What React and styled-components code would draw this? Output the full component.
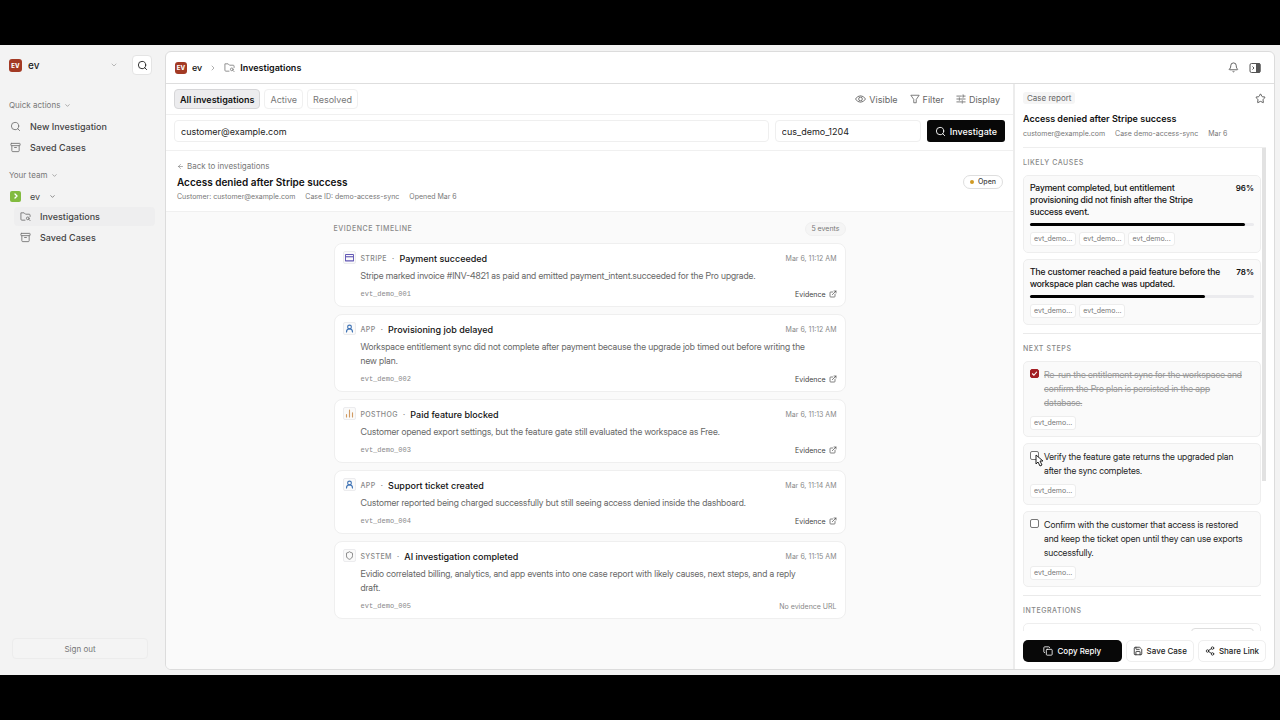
import React, { useState } from "react";
import styled, { createGlobalStyle } from "styled-components";
import {
  Search, Archive, ChevronDown, ChevronRight, Bell, Star, Copy, Save,
  Share2, ArrowLeft, UserRound, Shield, ExternalLink,
} from "lucide-react";

const GlobalStyle = createGlobalStyle`
  * { box-sizing: border-box; }
  body { margin: 0; background: #000; }
  body, button, input { font-family: Inter, "Liberation Sans", sans-serif; font-size: 9px; }
  h1, h2, h3, p, ul, ol { margin: 0; padding: 0; font-size: inherit; }
  ul, ol { list-style: none; }
  a { color: inherit; text-decoration: none; }
  button { cursor: pointer; margin: 0; }
  svg { display: block; flex: none; }
`;

const prose = `"Inter Display", Inter, "Liberation Sans", sans-serif`;

const Screen = styled.div`
  height: 100vh;
  min-height: 480px;
  padding: 45px 0;
  background: #000;
`;
const Shell = styled.div`
  height: 100%;
  display: flex;
  background: #f3f3f3;
  color: #111;
`;

/* Sidebar */
const Sidebar = styled.aside`
  width: 165px;
  flex: none;
  display: flex;
  flex-direction: column;
  padding: 10px 10px 16px 9px;
`;
const SideTop = styled.div`
  display: flex;
  align-items: center;
  gap: 14px;
  padding-right: 3px;
`;
const Workspace = styled.button`
  flex: 1;
  display: flex;
  align-items: center;
  gap: 6px;
  padding: 0;
  border: 0;
  background: none;
  color: #222;
  font-size: 10px;
  font-weight: 500;
  svg { margin-left: auto; color: #999; }
`;
const Logo = styled.span`
  display: grid;
  place-items: center;
  width: ${(p) => p.$size}px;
  height: ${(p) => p.$size}px;
  border-radius: 3px;
  background: #a33a24;
  color: #fff;
  font-size: 6px;
  font-weight: 800;
`;
const SquareButton = styled.button`
  display: grid;
  place-items: center;
  width: 20px;
  height: 20px;
  padding: 0;
  border: 1px solid #e4e4e4;
  border-radius: 4px;
  background: #fff;
  color: #222;
`;
const GroupLabel = styled.button`
  display: flex;
  align-items: center;
  gap: 4px;
  height: 12px;
  padding: 0;
  border: 0;
  background: none;
  color: #777;
  font-size: 8px;
  margin-top: ${(p) => p.$top}px;
`;
const NavList = styled.ul`
  display: flex;
  flex-direction: column;
  gap: 2px;
  margin-top: ${(p) => p.$top}px;
`;
const NavLink = styled.a`
  display: flex;
  align-items: center;
  gap: 9px;
  height: 19px;
  margin-left: ${(p) => (p.$nested ? 5 : 0)}px;
  padding-left: ${(p) => (p.$nested ? 6 : 1)}px;
  border-radius: 4px;
  background: ${(p) => (p.$active ? "#eeeeef" : "none")};
  color: #444;
  font-weight: 500;
  svg { color: #777; }
`;
const TeamButton = styled.button`
  display: flex;
  align-items: center;
  gap: 9px;
  height: 16px;
  margin-top: 7px;
  padding: 0 0 0 1px;
  border: 0;
  background: none;
  color: #444;
`;
const TeamMark = styled.span`
  display: grid;
  place-items: center;
  width: 11px;
  height: 11px;
  border-radius: 2px;
  background: #82bb3f;
  color: #fff;
`;
const SignOut = styled.button`
  height: 21px;
  margin: auto 7px 0 3px;
  border: 1px solid #ececec;
  border-radius: 4px;
  background: #f4f4f4;
  color: #777;
  font-size: 8px;
`;

/* Main frame */
const Main = styled.main`
  flex: 1;
  min-width: 0;
  display: flex;
  flex-direction: column;
  margin: 6px 5px 5px 0;
  border: 1px solid #dcdcdc;
  border-radius: 6px;
  background: #fff;
  overflow: hidden;
`;
const TopBar = styled.header`
  display: flex;
  align-items: center;
  justify-content: space-between;
  flex: none;
  height: 32px;
  padding: 0 13px 0 9px;
  border-bottom: 1px solid #dedede;
`;
const Crumbs = styled.nav`
  display: flex;
  align-items: center;
  gap: 7px;
  font-weight: 500;
  svg { color: #888; }
  a { display: flex; align-items: center; gap: 5px; }
  a[aria-current] { font-weight: 600; }
`;
const Inline = styled.div`
  display: flex;
  align-items: center;
  gap: ${(p) => p.$gap}px;
`;
const IconButton = styled.button`
  display: grid;
  place-items: center;
  padding: 0;
  border: 0;
  background: none;
  color: #555;
`;
const Columns = styled.div`
  flex: 1;
  min-height: 0;
  display: flex;
`;
const Center = styled.section`
  flex: 1;
  min-width: 0;
  display: flex;
  flex-direction: column;
  background: #fafafa;
`;
const Toolbar = styled.div`
  display: flex;
  align-items: center;
  justify-content: space-between;
  height: 31px;
  padding: 0 13px 0 8px;
  border-bottom: 1px solid #f0f0f0;
  background: #fff;
`;
const Tab = styled.button`
  height: 20px;
  padding: 0 5px;
  border: 1px solid ${(p) => (p.$active ? "#d6d6d8" : "#f0f0f0")};
  border-radius: 4px;
  background: ${(p) => (p.$active ? "#ececee" : "#fff")};
  color: ${(p) => (p.$active ? "#111" : "#777")};
  font-weight: ${(p) => (p.$active ? 600 : 400)};
`;
const ViewButton = styled.button`
  display: flex;
  align-items: center;
  gap: 3px;
  padding: 0;
  border: 0;
  background: none;
  color: #666;
`;
const SearchForm = styled.form`
  display: flex;
  gap: 6px;
  padding: 5px 8px 8px;
  border-bottom: 1px solid #f0f0f0;
  background: #fff;
`;
const Field = styled.input`
  flex: ${(p) => (p.$wide ? "1" : "none")};
  min-width: 0;
  width: 146px;
  height: 22px;
  padding: 0 6px;
  border: 1px solid #efefef;
  border-radius: 4px;
  background: #fff;
  color: #222;
  outline: 0;
`;
const DarkButton = styled.button`
  display: flex;
  align-items: center;
  justify-content: center;
  gap: 4px;
  height: 22px;
  padding: 0 8px;
  border: 0;
  border-radius: ${(p) => p.$radius || 3}px;
  background: #080808;
  color: #fff;
  font-size: ${(p) => (p.$small ? 8 : 9)}px;
  font-weight: 500;
`;
const CaseHeader = styled.div`
  display: flex;
  align-items: center;
  justify-content: space-between;
  padding: 9px 10px 8px 11px;
  border-bottom: 1px solid #f0f0f0;
  background: #fff;
`;
const BackLink = styled.a`
  display: flex;
  align-items: center;
  gap: 3px;
  height: 12px;
  color: #777;
  font-size: 8px;
`;
const CaseTitle = styled.h1`
  margin-top: 3px;
  font-size: 10px;
  line-height: 14px;
  font-weight: 600;
`;
const Meta = styled.div`
  display: flex;
  gap: 10px;
  margin-top: 2px;
  color: #777;
  font-size: 7px;
  line-height: 12px;
`;
const Status = styled.span`
  display: flex;
  align-items: center;
  gap: 4px;
  height: 14px;
  padding: 0 6px;
  border: 1px solid #dedede;
  border-radius: 7px;
  color: #444;
  font-size: 7px;
  font-weight: 500;
  &::before {
    content: "";
    width: 4px;
    height: 4px;
    border-radius: 50%;
    background: #d09a22;
  }
`;
const Timeline = styled.div`
  width: 100%;
  max-width: 512px;
  margin: 0 auto;
  padding-top: 10px;
`;
const TimelineHead = styled.div`
  display: flex;
  align-items: center;
  justify-content: space-between;
  height: 14px;
`;
const Overline = styled.h2`
  color: #888;
  font-size: 7px;
  line-height: 12px;
  font-weight: 500;
  letter-spacing: 0.08em;
  text-transform: uppercase;
`;
const Count = styled.span`
  padding: 0 5px;
  border: 1px solid #f0f0f0;
  border-radius: 7px;
  background: #f5f5f5;
  color: #777;
  font-size: 7px;
  line-height: 12px;
`;
const EventList = styled.ol`
  display: flex;
  flex-direction: column;
  gap: 7px;
  margin-top: 7px;
`;
const EventCard = styled.li`
  display: flex;
  gap: 5px;
  padding: 7px 8px 6px;
  border: 1px solid #efefef;
  border-radius: 8px;
  background: #fff;
`;
const EventIcon = styled.span`
  display: grid;
  place-items: center;
  width: 13px;
  height: 13px;
  border: 1px solid #ececee;
  border-radius: 2px;
  background: #fafafa;
  color: ${(p) => p.$color};
`;
const EventBody = styled.div`
  flex: 1;
  min-width: 0;
`;
const EventHead = styled.div`
  display: flex;
  align-items: center;
  gap: 5px;
  height: 14px;
  color: #888;
  h3 { color: #111; font-size: 9px; font-weight: 500; }
  time { margin-left: auto; font-size: 7px; }
`;
const Source = styled.span`
  font-size: 7px;
  font-weight: 500;
  letter-spacing: 0.05em;
  text-transform: uppercase;
`;
const EventText = styled.p`
  margin-top: 4px;
  padding-right: 20px;
  color: #666;
  font-family: ${prose};
  line-height: 14px;
`;
const EventFoot = styled.div`
  display: flex;
  align-items: center;
  justify-content: space-between;
  height: 12px;
  margin-top: 5px;
  color: #888;
  font-size: 7px;
  code { font: 7px "Liberation Mono", monospace; }
  a { display: flex; align-items: center; gap: 3px; color: #444; }
`;

/* Report panel */
const Report = styled.aside`
  width: 261px;
  flex: none;
  display: flex;
  flex-direction: column;
  padding: 7px 8px 0 8px;
  border-left: 2px solid #ececec;
`;
const ReportTop = styled.div`
  display: flex;
  align-items: center;
  justify-content: space-between;
  height: 14px;
`;
const Tag = styled.span`
  padding: 0 4px;
  border-radius: 3px;
  background: #f5f5f5;
  color: #666;
  font-size: 8px;
  line-height: 12px;
`;
const ReportTitle = styled.h2`
  margin-top: 7px;
  font-size: 9px;
  line-height: 14px;
  font-weight: 600;
`;
const ScrollFrame = styled.div`
  position: relative;
  flex: 1;
  min-height: 0;
  margin-top: 7px;
  border-top: 1px solid #eee;
`;
const ScrollArea = styled.div`
  height: 100%;
  padding-right: 5px;
  overflow-y: auto;
  scrollbar-width: none;
`;
const ScrollThumb = styled.div`
  position: absolute;
  top: 0;
  right: 0;
  width: 4px;
  height: 69%;
  background: #e2e2e2;
`;
const Block = styled.section`
  display: flex;
  flex-direction: column;
  gap: 6px;
  padding: 9px 0 8px;
  border-bottom: 1px solid #eaeaea;
`;
const Card = styled.article`
  padding: 6px;
  border: 1px solid #eee;
  border-radius: 5px;
  background: #fafafa;
`;
const CauseHead = styled.div`
  display: flex;
  justify-content: space-between;
  gap: 14px;
  font-family: ${prose};
  line-height: 12px;
  font-weight: 500;
  strong { font-family: Inter, sans-serif; font-size: 8px; font-weight: 600; }
`;
const Meter = styled.div`
  height: 3px;
  margin: 5px 0 6px;
  border-radius: 2px;
  background: #ebebee;
`;
const MeterFill = styled.div`
  height: 100%;
  border-radius: 2px;
  background: #000;
`;
const ChipRow = styled.div`
  display: flex;
  gap: 3px;
`;
const Chip = styled.span`
  height: 14px;
  padding: 0 3px;
  border: 1px solid #ededed;
  border-radius: 3px;
  background: #fff;
  color: #777;
  font-size: 7px;
  line-height: 12px;
`;
const Step = styled.label`
  display: flex;
  gap: 5px;
  margin-bottom: 6px;
  padding-right: 6px;
  color: ${(p) => (p.$done ? "#999" : "#222")};
  font-family: ${prose};
  line-height: 14px;
  text-decoration: ${(p) => (p.$done ? "line-through" : "none")};
`;
const Check = styled.input`
  appearance: none;
  flex: none;
  width: 9px;
  height: 9px;
  margin: 1px 0 0;
  border: 1px solid #777;
  border-radius: 2px;
  background: #fff;
  &:checked { border-color: #a31f24; background: #a31f24; }
`;
const CheckWrap = styled.span`
  position: relative;
  display: flex;
  svg { position: absolute; left: 1px; top: 2px; color: #fff; pointer-events: none; }
`;
const Pointer = styled.svg`
  && { left: 5px; top: 4px; }
`;
const IntegrationRow = styled(Card)`
  display: flex;
  justify-content: flex-end;
  height: 32px;
  padding: 4px 6px;
  background: #fff;
`;
const IntegrationSlot = styled.span`
  width: 63px;
  height: 18px;
  border: 1px solid #dedede;
  border-radius: 4px;
`;
const Actions = styled.footer`
  display: flex;
  gap: 4px;
  padding: 9px 0 7px;
  > :first-child { flex: 1; }
`;
const LightButton = styled.button`
  display: flex;
  align-items: center;
  gap: 4px;
  height: 22px;
  padding: 0 6px;
  border: 1px solid #efefef;
  border-radius: 5px;
  background: #fff;
  color: #222;
  font-size: 8px;
  font-weight: 500;
`;

const FolderIcon = () => (
  <svg width="11" height="11" viewBox="0 0 24 24" fill="none" stroke="currentColor" strokeWidth="2" strokeLinecap="round" strokeLinejoin="round">
    <path d="M11 20H4q-2 0-2-2V4h7l3 3h8q2 0 2 2v3" />
    <circle cx="17" cy="16" r="3" />
    <path d="m19.500 18.500 2.500 2.500" />
  </svg>
);
const EyeIcon = () => (
  <svg width="11" height="10" viewBox="0 0 24 22" fill="none" stroke="currentColor" strokeWidth="2" strokeLinejoin="round">
    <path d="M1 11q4-7 11-7t11 7q-4 7-11 7T1 11z" />
    <circle cx="12" cy="11" r="4" />
  </svg>
);
const FunnelIcon = () => (
  <svg width="10" height="10" viewBox="0 0 24 24" fill="none" stroke="currentColor" strokeWidth="2" strokeLinejoin="round">
    <path d="M2 3h20l-7 10v8h-6v-8z" />
  </svg>
);
const CardIcon = () => (
  <svg width="9" height="9" viewBox="0 0 24 24" fill="none" stroke="currentColor" strokeWidth="3" strokeLinejoin="round">
    <rect x="1" y="4" width="22" height="17" rx="2" />
    <path d="M1 10h22" />
  </svg>
);
const SlidersIcon = () => (
  <svg width="10" height="10" viewBox="0 0 24 24" fill="none" stroke="currentColor" strokeWidth="2" strokeLinecap="round">
    <path d="M2 5h11M17 5h5M17 2v6M2 12h4M10 12h12M8 9v6M2 19h11M17 19h5M15 16v6" />
  </svg>
);
const BarsIcon = () => (
  <svg width="9" height="9" viewBox="0 0 24 24" fill="none" stroke="currentColor" strokeWidth="3" strokeLinecap="round">
    <path d="M4 21v-6M12 21V3M20 21V10" />
  </svg>
);
const PanelIcon = () => (
  <svg width="12" height="12" viewBox="0 0 24 24" fill="none" stroke="currentColor" strokeWidth="2">
    <rect x="2" y="3" width="20" height="18" rx="3" />
    <path d="M15 3h5q2 0 2 2v14q0 2-2 2h-5z" fill="currentColor" />
    <path d="m7 9 3 3-3 3" />
  </svg>
);

const EVENTS = [
  { source: "Stripe", icon: <CardIcon />, color: "#6257b5", title: "Payment succeeded", time: "Mar 6, 11:12 AM", text: "Stripe marked invoice #INV-4821 as paid and emitted payment_intent.succeeded for the Pro upgrade.", id: "evt_demo_001", link: true },
  { source: "App", icon: <UserRound size={9} strokeWidth={3} />, color: "#3f73b5", title: "Provisioning job delayed", time: "Mar 6, 11:12 AM", text: "Workspace entitlement sync did not complete after payment because the upgrade job timed out before writing the new plan.", id: "evt_demo_002", link: true },
  { source: "PostHog", icon: <BarsIcon />, color: "#d19a62", title: "Paid feature blocked", time: "Mar 6, 11:13 AM", text: "Customer opened export settings, but the feature gate still evaluated the workspace as Free.", id: "evt_demo_003", link: true },
  { source: "App", icon: <UserRound size={9} strokeWidth={3} />, color: "#3f73b5", title: "Support ticket created", time: "Mar 6, 11:14 AM", text: "Customer reported being charged successfully but still seeing access denied inside the dashboard.", id: "evt_demo_004", link: true },
  { source: "System", icon: <Shield size={9} />, color: "#666", title: "AI investigation completed", time: "Mar 6, 11:15 AM", text: "Evidio correlated billing, analytics, and app events into one case report with likely causes, next steps, and a reply draft.", id: "evt_demo_005", link: false },
];
const CAUSES = [
  { text: "Payment completed, but entitlement provisioning did not finish after the Stripe success event.", score: 96, chips: 3 },
  { text: "The customer reached a paid feature before the workspace plan cache was updated.", score: 78, chips: 2 },
];
const STEPS = [
  "Re-run the entitlement sync for the workspace and confirm the Pro plan is persisted in the app database.",
  "Verify the feature gate returns the upgraded plan after the sync completes.",
  "Confirm with the customer that access is restored and keep the ticket open until they can use exports successfully.",
];

const Chips = ({ count }) => (
  <ChipRow>
    {Array.from({ length: count }, (_, i) => <Chip key={i}>evt_demo...</Chip>)}
  </ChipRow>
);

export default function App() {
  const [tab, setTab] = useState("All investigations");
  const [done, setDone] = useState([true, false, false]);
  const toggle = (i) => setDone(done.map((d, n) => (n === i ? !d : d)));

  return (
    <Screen>
      <GlobalStyle />
      <Shell>
        <Sidebar>
          <SideTop>
            <Workspace><Logo $size={13}>EV</Logo>ev<ChevronDown size={8} /></Workspace>
            <SquareButton aria-label="Search"><Search size={11} /></SquareButton>
          </SideTop>
          <GroupLabel $top={24}>Quick actions<ChevronDown size={7} /></GroupLabel>
          <NavList $top={6}>
            <li><NavLink href="#new"><Search size={11} />New Investigation</NavLink></li>
            <li><NavLink href="#saved"><Archive size={11} />Saved Cases</NavLink></li>
          </NavList>
          <GroupLabel $top={12}>Your team<ChevronDown size={7} /></GroupLabel>
          <TeamButton>
            <TeamMark><ChevronRight size={8} strokeWidth={4} /></TeamMark>ev<ChevronDown size={7} />
          </TeamButton>
          <NavList $top={3}>
            <li><NavLink href="#investigations" $nested $active><FolderIcon />Investigations</NavLink></li>
            <li><NavLink href="#team-saved" $nested><Archive size={11} />Saved Cases</NavLink></li>
          </NavList>
          <SignOut>Sign out</SignOut>
        </Sidebar>

        <Main>
          <TopBar>
            <Crumbs aria-label="Breadcrumb">
              <a href="#home"><Logo $size={12}>EV</Logo>ev</a>
              <ChevronRight size={8} />
              <a href="#investigations" aria-current="page"><FolderIcon />Investigations</a>
            </Crumbs>
            <Inline $gap={10}>
              <IconButton aria-label="Notifications"><Bell size={11} /></IconButton>
              <IconButton aria-label="Toggle panel"><PanelIcon /></IconButton>
            </Inline>
          </TopBar>
          <Columns>
            <Center>
              <Toolbar>
                <Inline $gap={4}>
                  {["All investigations", "Active", "Resolved"].map((name) => (
                    <Tab key={name} $active={tab === name} onClick={() => setTab(name)}>{name}</Tab>
                  ))}
                </Inline>
                <Inline $gap={12}>
                  <ViewButton><EyeIcon />Visible</ViewButton>
                  <ViewButton><FunnelIcon />Filter</ViewButton>
                  <ViewButton><SlidersIcon />Display</ViewButton>
                </Inline>
              </Toolbar>
              <SearchForm onSubmit={(e) => e.preventDefault()}>
                <Field $wide aria-label="Customer email" defaultValue="customer@example.com" />
                <Field aria-label="Customer ID" defaultValue="cus_demo_1204" />
                <DarkButton><Search size={11} />Investigate</DarkButton>
              </SearchForm>
              <CaseHeader>
                <div>
                  <BackLink href="#all"><ArrowLeft size={7} />Back to investigations</BackLink>
                  <CaseTitle>Access denied after Stripe success</CaseTitle>
                  <Meta>
                    <span>Customer: customer@example.com</span>
                    <span>Case ID: demo-access-sync</span>
                    <span>Opened Mar 6</span>
                  </Meta>
                </div>
                <Status>Open</Status>
              </CaseHeader>
              <Timeline>
                <TimelineHead>
                  <Overline>Evidence timeline</Overline>
                  <Count>5 events</Count>
                </TimelineHead>
                <EventList>
                  {EVENTS.map((e) => (
                    <EventCard key={e.id}>
                      <EventIcon $color={e.color}>{e.icon}</EventIcon>
                      <EventBody>
                        <EventHead>
                          <Source>{e.source}</Source>
                          <span>·</span>
                          <h3>{e.title}</h3>
                          <time>{e.time}</time>
                        </EventHead>
                        <EventText>{e.text}</EventText>
                        <EventFoot>
                          <code>{e.id}</code>
                          {e.link
                            ? <a href={"#" + e.id}>Evidence<ExternalLink size={8} /></a>
                            : <span>No evidence URL</span>}
                        </EventFoot>
                      </EventBody>
                    </EventCard>
                  ))}
                </EventList>
              </Timeline>
            </Center>

            <Report>
              <ReportTop>
                <Tag>Case report</Tag>
                <IconButton aria-label="Star case"><Star size={11} /></IconButton>
              </ReportTop>
              <ReportTitle>Access denied after Stripe success</ReportTitle>
              <Meta>
                <span>customer@example.com</span>
                <span>Case demo-access-sync</span>
                <span>Mar 6</span>
              </Meta>
              <ScrollFrame>
                <ScrollArea>
                  <Block>
                    <Overline>Likely causes</Overline>
                    {CAUSES.map((c) => (
                      <Card key={c.score}>
                        <CauseHead><span>{c.text}</span><strong>{c.score}%</strong></CauseHead>
                        <Meter><MeterFill style={{ width: c.score + "%" }} /></Meter>
                        <Chips count={c.chips} />
                      </Card>
                    ))}
                  </Block>
                  <Block>
                    <Overline>Next steps</Overline>
                    {STEPS.map((text, i) => (
                      <Card key={text}>
                        <Step $done={done[i]}>
                          <CheckWrap>
                            <Check type="checkbox" checked={done[i]} onChange={() => toggle(i)} />
                            {done[i] && (
                              <svg width="7" height="7" viewBox="0 0 12 12" fill="none" stroke="currentColor" strokeWidth="2">
                                <path d="m2 6 3 3 5-6" />
                              </svg>
                            )}
                            {i === 1 && (
                              <Pointer width="9" height="13" viewBox="0 0 9 13">
                                <path d="M1 1v9l2-2 2 4 2-1-2-4h3z" fill="#fff" stroke="#222" strokeWidth="1" />
                              </Pointer>
                            )}
                          </CheckWrap>
                          <span>{text}</span>
                        </Step>
                        <Chips count={1} />
                      </Card>
                    ))}
                  </Block>
                  <Block>
                    <Overline>Integrations</Overline>
                    <IntegrationRow><IntegrationSlot /></IntegrationRow>
                  </Block>
                </ScrollArea>
                <ScrollThumb />
              </ScrollFrame>
              <Actions>
                <DarkButton $radius={5} $small><Copy size={10} />Copy Reply</DarkButton>
                <LightButton><Save size={10} />Save Case</LightButton>
                <LightButton><Share2 size={10} />Share Link</LightButton>
              </Actions>
            </Report>
          </Columns>
        </Main>
      </Shell>
    </Screen>
  );
}
